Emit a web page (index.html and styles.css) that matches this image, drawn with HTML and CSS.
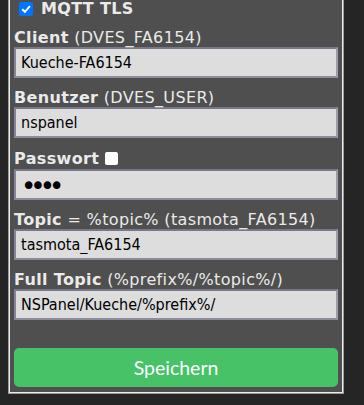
FILE: index.html
```html
<!DOCTYPE html>
<html lang="de">
<head>
    <meta charset="UTF-8">
    <meta name="viewport" content="width=device-width, initial-scale=1.0">
    <title>MQTT konfigurieren</title>
    <link rel="stylesheet" href="styles.css">
</head>
<body>
    <div class="page">
        <fieldset class="panel">
            <div class="check-row">
                <span class="box checked">
                    <svg width="14" height="14" viewBox="0 0 14 14"><path d="M3.2 7.2 L5.9 9.8 L10.9 4.2" fill="none" stroke="#fff" stroke-width="2"/></svg>
                </span><b>MQTT TLS</b>
            </div>
            <div class="field">
                <label class="field-label" for="client"><b>Client</b> (DVES_FA6154)</label>
                <input id="client" class="text-input" type="text" value="Kueche-FA6154">
            </div>
            <div class="field">
                <label class="field-label" for="user"><b>Benutzer</b> (DVES_USER)</label>
                <input id="user" class="text-input" type="text" value="nspanel">
            </div>
            <div class="field">
                <label class="field-label tall" for="pass"><b>Passwort</b> <span class="box"></span></label>
                <input id="pass" class="text-input secret" type="password" value="****">
            </div>
            <div class="field">
                <label class="field-label" for="topic"><b>Topic</b> = %topic% (tasmota_FA6154)</label>
                <input id="topic" class="text-input" type="text" value="tasmota_FA6154">
            </div>
            <div class="field">
                <label class="field-label" for="full"><b>Full Topic</b> (%prefix%/%topic%/)</label>
                <input id="full" class="text-input" type="text" value="NSPanel/Kueche/%prefix%/">
            </div>
            <button class="save-btn" type="button">Speichern</button>
        </fieldset>
    </div>
</body>
</html>
```

FILE: styles.css
```css
body {
    margin: 0;
    padding: 0;
    background-color: #252525;
    font-family: "DejaVu Sans", Verdana, sans-serif;
    font-size: 16px;
    color: #eaeaea;
}
.page {
    padding-left: 8px;
}
.panel {
    box-sizing: border-box;
    width: 336px;
    min-width: 0;
    margin: 0;
    padding: 0 5px 6px;
    background-color: #4f4f4f;
    border: 1px solid #9a9a9a;
    border-top: none;
    box-shadow: inset 1px 0 #ececec, inset -1px 0 #ececec, inset 0 -1px #ececec;
}
.check-row {
    margin-top: -1px;
    line-height: 19px;
    letter-spacing: 0.35px;
    display: flex;
    align-items: center;
}
.box {
    display: inline-block;
    box-sizing: border-box;
    width: 13px;
    height: 13px;
    background-color: #fff;
    border-radius: 2px;
    vertical-align: -1px;
}
.box.checked {
    width: 14px;
    height: 14px;
    margin: 0 8px 0 5px;
    background-color: #0075ff;
}
.box svg {
    display: block;
}
.field {
    margin-top: 10px;
}
.field-label {
    display: block;
    line-height: 19px;
    letter-spacing: 0.35px;
    white-space: nowrap;
}
.field-label.tall {
    line-height: 21px;
}
.text-input {
    display: block;
    box-sizing: border-box;
    width: 100%;
    height: 31px;
    margin: 0;
    padding: 0 5px;
    border: 2px solid;
    border-color: #78788a #9c9cac #8c8c9c #84849a;
    background-color: #dddddd;
    color: #000;
    font-family: "DejaVu Sans Condensed", "DejaVu Sans", sans-serif;
    font-size: 16px;
    outline: none;
}
.text-input.secret {
    font-family: "DejaVu Sans", sans-serif;
    font-size: 26px;
    letter-spacing: -6px;
    padding-top: 3px;
}
.save-btn {
    display: block;
    width: 100%;
    height: 39px;
    margin-top: 28px;
    border: 0;
    border-radius: 5px;
    background-color: #47c266;
    color: #faffff;
    font-family: Lato, "Open Sans", sans-serif;
    font-size: 19.5px;
    cursor: pointer;
}
```
